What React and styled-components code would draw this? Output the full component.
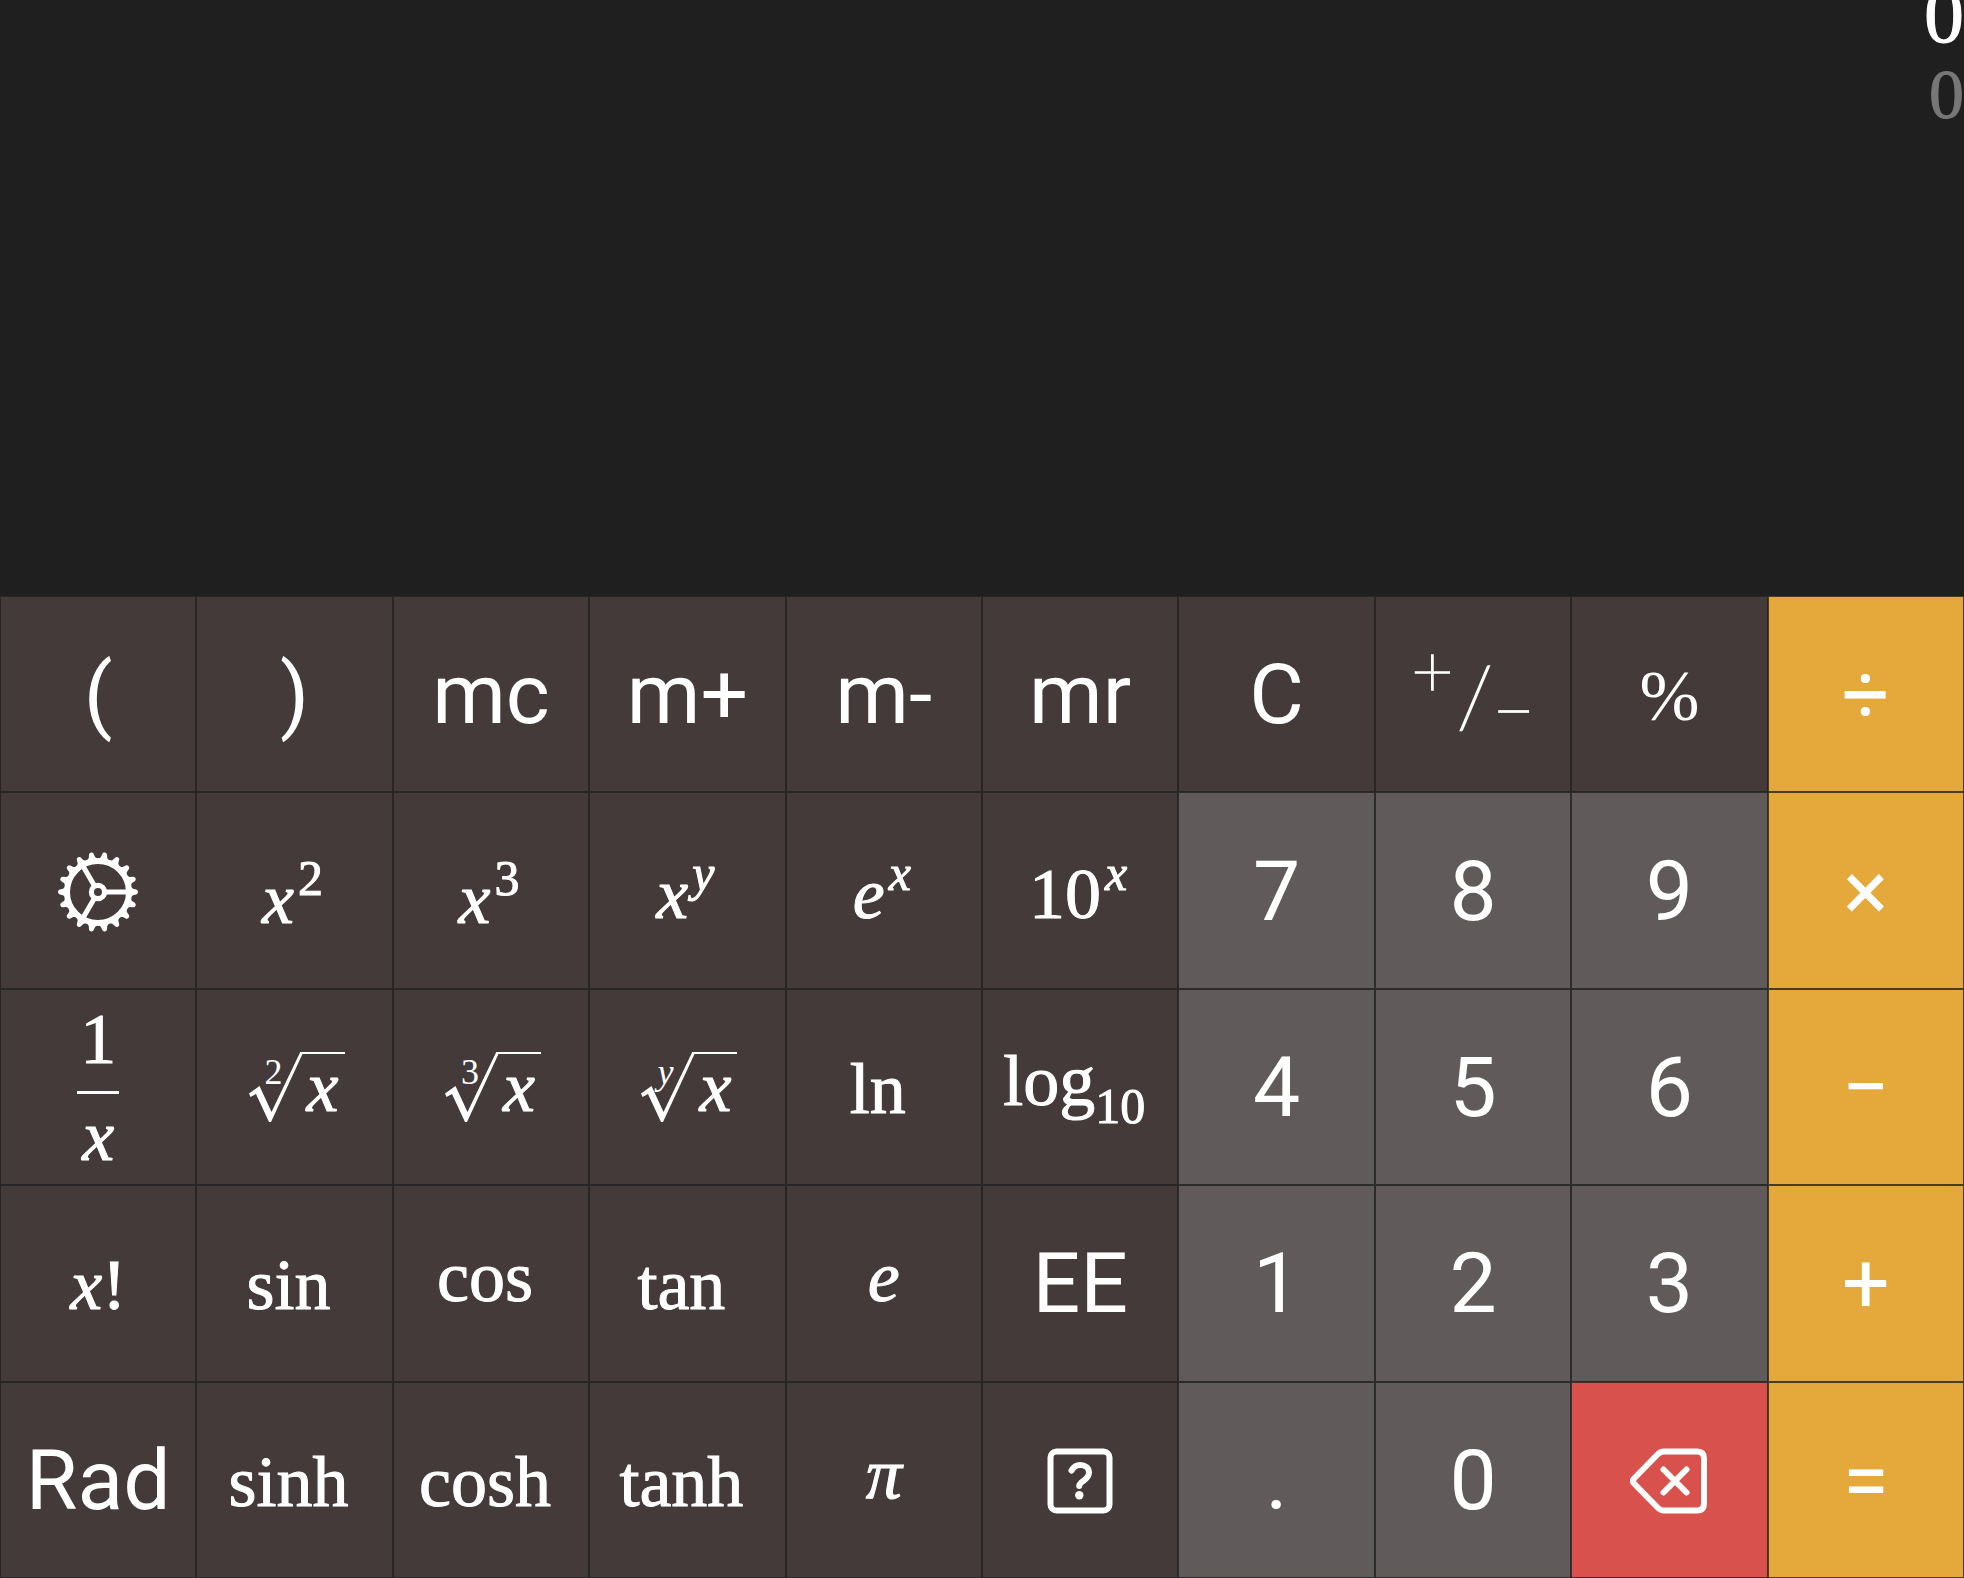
import React, { useState } from "react";
import styled, { createGlobalStyle, css } from "styled-components";

const GlobalStyle = createGlobalStyle`
  *, *::before, *::after { box-sizing: border-box; }
  body { margin: 0; background: #1f1f1f; }
`;

const mathFont = css`
  font-family: "Liberation Serif", serif;
  font-size: 72px;
  line-height: 72px;
  -webkit-text-stroke: 1px currentColor;
`;

const Calculator = styled.main`
  display: flex;
  flex-direction: column;
  min-height: 100vh;
  background: #1f1f1f;
`;

const Display = styled.section`
  flex: 1;
  display: flex;
  flex-direction: column;
  align-items: flex-end;
  gap: 30px;
  overflow: hidden;
  font-family: "Liberation Serif", serif;
  -webkit-text-stroke: 1px currentColor;
`;

const Expression = styled.output`
  color: #fff;
  font-size: 80px;
  line-height: 30px;
`;

const Result = styled.output`
  color: #777;
  font-size: 70px;
  line-height: 70px;
`;

const Keypad = styled.section`
  display: grid;
  grid-template-columns: repeat(10, minmax(0, 1fr));
`;

const tones = {
  function: "#433a39",
  digit: "#605a5a",
  operator: "#e4a93a",
  danger: "#d9514c",
};

const Key = styled.button`
  display: flex;
  align-items: center;
  justify-content: center;
  aspect-ratio: 1;
  min-width: 0;
  margin: 0;
  padding: 2px 0 0;
  border: 1px solid rgba(32, 32, 32, 0.8);
  border-radius: 0;
  background: ${(p) => tones[p.$tone]};
  color: #fff;
  font-family: Roboto, sans-serif;
  font-size: 84px;
  line-height: 96px;
  cursor: pointer;
`;

const MathText = styled.span`
  ${mathFont}
  display: block;
  white-space: nowrap;
  padding-top: 2px;
  padding-bottom: ${(p) => (p.$short ? 16 : 0)}px;
`;

const FunctionName = styled(MathText)`
  padding-right: 12px;
`;

const Power = styled(MathText)`
  padding-top: ${(p) => (p.$tall ? 14 : 4)}px;
  padding-right: 4px;
`;

const Superscript = styled.sup`
  margin-left: 4px;
  font-size: 50px;
  line-height: 0;
  vertical-align: 28px;
`;

const Subscript = styled.sub`
  font-size: 50px;
  line-height: 0;
  vertical-align: -18px;
`;

const SignToggle = styled.span`
  font-family: Lato, sans-serif;
  font-weight: 100;
  font-size: 84px;
  line-height: 84px;
  white-space: nowrap;
  -webkit-text-stroke: 2px currentColor;
`;

const Raised = styled.sup`
  margin-right: 4px;
  font-size: 72px;
  line-height: 0;
  vertical-align: 30px;
`;

const Lowered = styled.sub`
  font-size: 72px;
  line-height: 0;
  vertical-align: -9px;
`;

const PercentText = styled(MathText)`
  -webkit-text-stroke: 0;
`;

const Fraction = styled.span`
  ${mathFont}
  display: flex;
  flex-direction: column;
  align-items: center;
`;

const FractionBar = styled.span`
  width: 42px;
  height: 3px;
  margin: 16px 0 6px;
  background: #fff;
`;

const Root = styled.span`
  position: relative;
  display: flex;
  padding-left: 4px;
  padding-bottom: 2px;
`;

const RootIndex = styled.span`
  position: absolute;
  left: 20px;
  top: 2px;
  font-family: "Liberation Serif", serif;
  font-size: 36px;
  line-height: 36px;
`;

const Radicand = styled.span`
  ${mathFont}
  height: 70px;
  line-height: 66px;
  padding: 0 6px 0 4px;
  border-top: 2px solid #fff;
`;

const Icon = styled.svg`
  display: block;
  flex: none;
`;

const teeth = Array.from({ length: 18 }, (_, i) => i * 20);

const GearIcon = () => (
  <Icon width="80" height="80" viewBox="-40 -40 80 80" fill="none" stroke="#fff" aria-hidden="true">
    <circle r="31" strokeWidth="6" />
    <circle r="6.6" strokeWidth="5.2" />
    {[0, 120, 240].map((a) => (
      <path key={a} d="M8 0H29" strokeWidth="5" transform={`rotate(${a})`} />
    ))}
    {teeth.map((a) => (
      <path
        key={a}
        d="M33 -5L35 -3.200L38.200 -2.400Q40 -2 40 0Q40 2 38.200 2.400L35 3.200L33 5Z"
        fill="#fff"
        stroke="none"
        transform={`rotate(${a})`}
      />
    ))}
  </Icon>
);

const HelpIcon = () => (
  <Icon width="66" height="66" viewBox="0 0 66 66" fill="none" stroke="#fff" strokeWidth="6" aria-hidden="true">
    <rect x="3.5" y="3.5" width="59" height="59" rx="6" />
    <path
      d="M24.5 22.500C26.500 18.800 29.500 17 33.300 17C38.200 17 42 20 42 24.500C42 28.300 39.700 30.500 36.500 32.700C33.500 34.800 32.200 36.300 32.200 38"
      strokeWidth="6"
      strokeLinecap="round"
    />
    <circle cx="32.3" cy="47.2" r="4.2" fill="#fff" stroke="none" />
  </Icon>
);

const BackspaceIcon = () => (
  <Icon
    width="78"
    height="66"
    viewBox="0 0 78 66"
    fill="none"
    stroke="#fff"
    strokeWidth="6"
    strokeLinecap="round"
    strokeLinejoin="round"
    aria-hidden="true"
  >
    <path d="M34 3.5H67Q74 3.5 74 10.5V55.5Q74 62.5 67 62.5H34Q30.5 62.5 28 60L4.500 36Q1.500 33 4.500 30L28 6Q30.500 3.500 34 3.500Z" />
    <path d="M33.500 21.500L56.500 44.500M56.500 21.500L33.500 44.500" />
  </Icon>
);

const RadicalSign = () => (
  <Icon width="54" height="70" viewBox="0 0 54 70" aria-hidden="true">
    <path d="M0 41.500L10.500 34L22.500 60L51.300 0H54V2H53.500L22 70H20L7 42L1.500 45Z" fill="#fff" />
  </Icon>
);

const Var = ({ children }) => <i>{children}</i>;

const Pow = ({ base, exponent, tall }) => (
  <Power $tall={tall}>
    {base}
    <Superscript>{exponent}</Superscript>
  </Power>
);

const Radical = ({ index }) => (
  <Root>
    <RootIndex>{index}</RootIndex>
    <RadicalSign />
    <Radicand>
      <Var>x</Var>
    </Radicand>
  </Root>
);

const x = <Var>x</Var>;
const y = <Var>y</Var>;

const buildKeys = (angleUnit, toggleAngleUnit) => [
  { id: "(" },
  { id: ")" },
  { id: "mc" },
  { id: "m+" },
  { id: "m-" },
  { id: "mr" },
  { id: "C" },
  {
    id: "sign",
    name: "plus or minus",
    face: (
      <SignToggle>
        <Raised>+</Raised>/<Lowered>−</Lowered>
      </SignToggle>
    ),
  },
  { id: "%", face: <PercentText>%</PercentText> },
  { id: "÷", tone: "operator" },

  { id: "settings", name: "Settings", face: <GearIcon /> },
  { id: "square", face: <Pow tall base={x} exponent="2" /> },
  { id: "cube", face: <Pow tall base={x} exponent="3" /> },
  { id: "power", face: <Pow base={x} exponent={y} /> },
  { id: "exp", face: <Pow base={<Var>e</Var>} exponent={x} /> },
  { id: "exp10", face: <Pow base="10" exponent={x} /> },
  { id: "7", tone: "digit" },
  { id: "8", tone: "digit" },
  { id: "9", tone: "digit" },
  { id: "×", tone: "operator" },

  {
    id: "reciprocal",
    face: (
      <Fraction>
        <span>1</span>
        <FractionBar />
        {x}
      </Fraction>
    ),
  },
  { id: "sqrt", face: <Radical index="2" /> },
  { id: "cbrt", face: <Radical index="3" /> },
  { id: "root", face: <Radical index={y} /> },
  { id: "ln", face: <FunctionName>ln</FunctionName> },
  {
    id: "log",
    face: (
      <FunctionName $short>
        log<Subscript>10</Subscript>
      </FunctionName>
    ),
  },
  { id: "4", tone: "digit" },
  { id: "5", tone: "digit" },
  { id: "6", tone: "digit" },
  { id: "−", tone: "operator" },

  { id: "factorial", face: <MathText>{x}!</MathText> },
  { id: "sin", face: <FunctionName>sin</FunctionName> },
  { id: "cos", face: <FunctionName $short>cos</FunctionName> },
  { id: "tan", face: <FunctionName>tan</FunctionName> },
  { id: "e", face: <MathText $short><Var>e</Var></MathText> },
  { id: "EE" },
  { id: "1", tone: "digit" },
  { id: "2", tone: "digit" },
  { id: "3", tone: "digit" },
  { id: "+", tone: "operator" },

  { id: "angle", face: angleUnit, onPress: toggleAngleUnit },
  { id: "sinh", face: <FunctionName>sinh</FunctionName> },
  { id: "cosh", face: <FunctionName>cosh</FunctionName> },
  { id: "tanh", face: <FunctionName>tanh</FunctionName> },
  { id: "pi", face: <MathText $short><Var>π</Var></MathText> },
  { id: "help", name: "Help", face: <HelpIcon /> },
  { id: ".", tone: "digit" },
  { id: "0", tone: "digit" },
  { id: "backspace", name: "Backspace", tone: "danger", face: <BackspaceIcon /> },
  { id: "=", tone: "operator" },
];

export default function App() {
  const [angleUnit, setAngleUnit] = useState("Rad");
  const keys = buildKeys(angleUnit, () => setAngleUnit(angleUnit === "Rad" ? "Deg" : "Rad"));

  return (
    <>
      <GlobalStyle />
      <Calculator>
        <Display>
          <Expression>0</Expression>
          <Result>0</Result>
        </Display>
        <Keypad>
          {keys.map(({ id, face, tone = "function", name, onPress }) => (
            <Key key={id} type="button" $tone={tone} aria-label={name} onClick={onPress}>
              {face ?? id}
            </Key>
          ))}
        </Keypad>
      </Calculator>
    </>
  );
}
